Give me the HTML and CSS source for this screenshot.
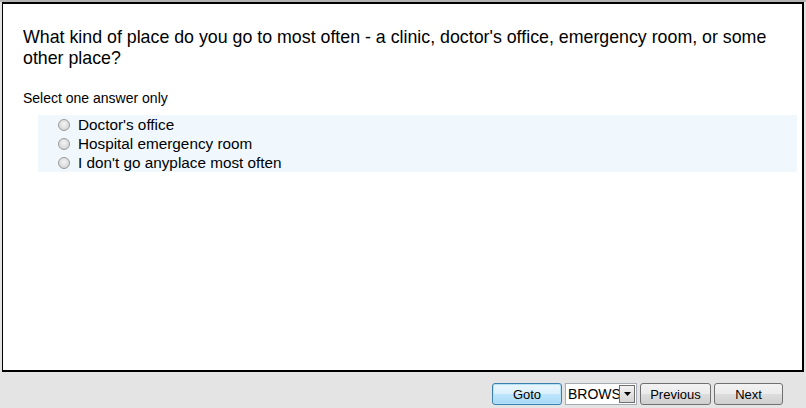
FILE: index.html
```html
<!DOCTYPE html>
<html>
<head>
<meta charset="utf-8">
<link rel="stylesheet" href="styles.css">
</head>
<body>
<div class="page">
  <div class="main">
    <div class="question">What kind of place do you go to most often - a clinic, doctor's office, emergency room, or some other place?</div>
    <div class="instr">Select one answer only</div>
    <div class="options">
      <label class="opt"><span class="radio"></span>Doctor's office</label>
      <label class="opt"><span class="radio"></span>Hospital emergency room</label>
      <label class="opt"><span class="radio"></span>I don't go anyplace most often</label>
    </div>
  </div>
  <div class="footer">
    <button class="btn goto">Goto</button>
    <div class="select"><span class="selval">BROWSE</span><span class="arrow"><svg width="7" height="4" viewBox="0 0 7 4"><path d="M0 0H7L3.5 4Z" fill="#000"/></svg></span></div>
    <button class="btn prev">Previous</button>
    <button class="btn next">Next</button>
  </div>
</div>
</body>
</html>
```
FILE: styles.css
```css
html, body { margin: 0; padding: 0; }
body {
  font-family: "Liberation Sans", Arial, sans-serif;
  background: #e4e4e4;
  width: 806px;
  height: 408px;
  overflow: hidden;
}
.page {
  display: flex;
  flex-direction: column;
  height: 408px;
  border-top: 2px solid #b4b4b4;
  box-sizing: border-box;
}
.main {
  margin: 0 2px 0 2px;
  height: 370px;
  box-sizing: border-box;
  background: #fff;
  border: 1px solid #000;
  border-width: 2px 2px 2px 1px;
  padding: 23px 0 0 20px;
}
.question {
  font-size: 17.8px;
  line-height: 21px;
  color: #000;
  width: 765px;
}
.instr {
  font-size: 14px;
  line-height: 16px;
  margin-top: 21px;
}
.options {
  margin: 9px 5px 0 15px;
  background: #f0f8fe;
  padding: 0 0 0 20px;
  height: 57px;
  box-sizing: border-box;
}
.opt {
  display: flex;
  align-items: center;
  font-size: 15.3px;
  line-height: 19px;
  height: 19px;
}
.radio {
  width: 12px;
  height: 12px;
  border-radius: 50%;
  border: 1px solid #9a9a9a;
  background: radial-gradient(circle at 50% 40%, #f4f4f4 0%, #dcdcdc 60%, #c8c8c8 100%);
  margin-right: 8px;
  box-sizing: border-box;
  flex: none;
}
.footer {
  display: flex;
  align-items: center;
  padding: 11px 0 0 492px;
  gap: 3px;
}
.btn {
  font-family: "Liberation Sans", Arial, sans-serif;
  font-size: 13px;
  height: 22px;
  width: 70px;
  padding: 0;
  border: 1px solid #707070;
  border-radius: 3px;
  background: linear-gradient(#f2f2f2 0%, #ebebeb 50%, #dddddd 51%, #cfcfcf 100%);
  color: #000;
}
.btn.goto {
  border-color: #3c7fb1;
  background: linear-gradient(#eaf6fd 0%, #d9f0fc 50%, #bee6fd 51%, #a7d9f5 100%);
  box-shadow: inset 0 0 0 1px #b4e2f7;
}
.btn.prev { width: 71px; }
.btn.next { width: 69px; }
.select {
  display: flex;
  width: 72px;
  height: 22px;
  box-sizing: border-box;
  border: 1px solid #a5acb5;
  background: #fff;
  overflow: hidden;
}
.selval {
  flex: 1;
  font-size: 14px;
  line-height: 20px;
  padding-left: 2px;
  overflow: hidden;
  white-space: nowrap;
  text-overflow: clip;
  width: 52px;
}
.arrow {
  width: 16px;
  height: 18px;
  margin: 1px 1px 1px 0;
  box-sizing: border-box;
  border: 1px solid #707070;
  background: linear-gradient(#f2f2f2, #d4d4d4);
  display: flex;
  align-items: center;
  justify-content: center;
}
```
